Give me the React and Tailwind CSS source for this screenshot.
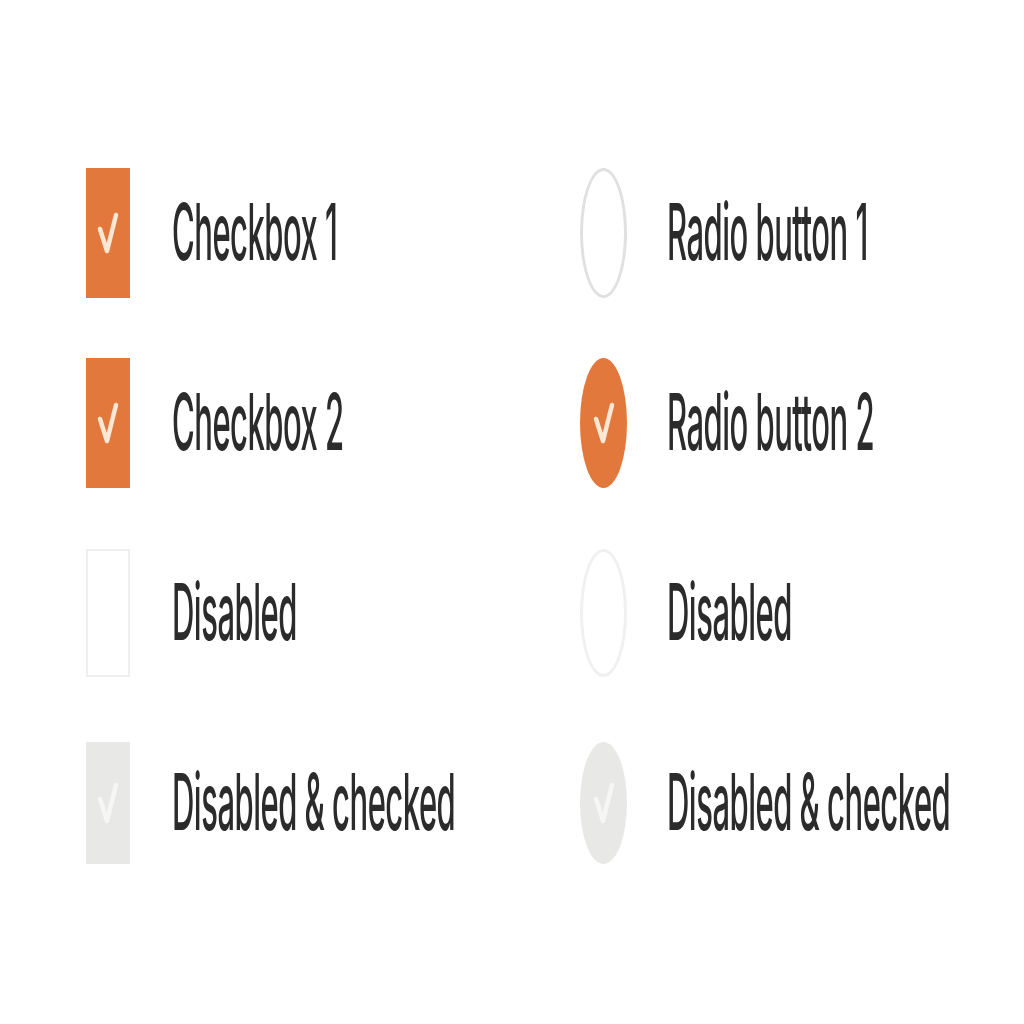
import React from "react";

const Check = ({ color = "#fbe7d3" }) => (
  <svg viewBox="0 0 22 44" preserveAspectRatio="none" className="w-[22px] h-[44px]">
    <path d="M3 18 L10 40 L19 4" fill="none" stroke={color} strokeWidth="4.5" strokeLinejoin="round" strokeLinecap="round" />
  </svg>
);

const Label = ({ children }) => (
  <span className="inline-block origin-center scale-y-[2.55] -translate-y-[3px] text-[31px] leading-none font-medium text-[#2b2b2b] tracking-[-0.5px]">
    {children}
  </span>
);

const Box = ({ state }) => {
  if (state === "checked")
    return (
      <div className="w-[44px] h-[130px] bg-[#e2783b] flex items-center justify-center">
        <Check />
      </div>
    );
  if (state === "disabled")
    return <div className="w-[44px] h-[128px] border-2 border-[#efefef] bg-white" />;
  if (state === "disabledChecked")
    return (
      <div className="w-[44px] h-[122px] bg-[#e8e8e6] flex items-center justify-center">
        <Check color="#f6f6f4" />
      </div>
    );
  return <div className="w-[44px] h-[130px] border-2 border-[#dcdcdc]" />;
};

const Radio = ({ state }) => {
  if (state === "checked")
    return (
      <div className="w-[47px] h-[130px] rounded-[50%] bg-[#e2783b] flex items-center justify-center">
        <Check />
      </div>
    );
  if (state === "disabled")
    return <div className="w-[47px] h-[128px] rounded-[50%] border-[3px] border-[#f0f0f0] bg-white" />;
  if (state === "disabledChecked")
    return (
      <div className="w-[47px] h-[122px] rounded-[50%] bg-[#e8e8e6] flex items-center justify-center">
        <Check color="#f6f6f4" />
      </div>
    );
  return <div className="w-[47px] h-[130px] rounded-[50%] border-[3px] border-[#e0e0e0]" />;
};

const checks = [
  { state: "checked", label: "Checkbox 1" },
  { state: "checked", label: "Checkbox 2" },
  { state: "disabled", label: "Disabled" },
  { state: "disabledChecked", label: "Disabled & checked" },
];

const radios = [
  { state: "empty", label: "Radio button 1" },
  { state: "checked", label: "Radio button 2" },
  { state: "disabled", label: "Disabled" },
  { state: "disabledChecked", label: "Disabled & checked" },
];

export default function App() {
  return (
    <div className="w-[1024px] h-[1024px] bg-white pt-[168px] flex" style={{ fontFamily: "Inter, 'Noto Sans', sans-serif" }}>
      <div className="w-[580px] pl-[86px] flex flex-col gap-[60px]">
        {checks.map((c) => (
          <div key={c.label} className="h-[130px] flex items-center gap-[42px]">
            <Box state={c.state} />
            <Label>{c.label}</Label>
          </div>
        ))}
      </div>
      <div className="flex flex-col gap-[60px]">
        {radios.map((r) => (
          <div key={r.label} className="h-[130px] flex items-center gap-[40px]">
            <Radio state={r.state} />
            <Label>{r.label}</Label>
          </div>
        ))}
      </div>
    </div>
  );
}
